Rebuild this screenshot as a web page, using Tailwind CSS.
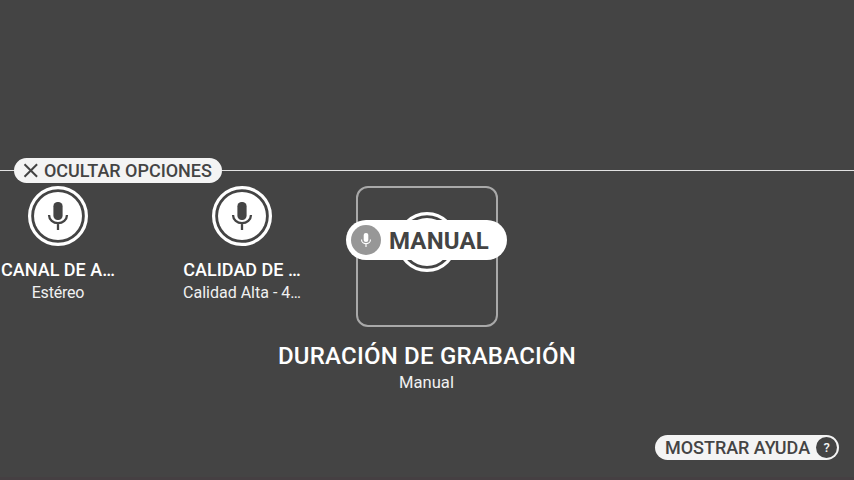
<!DOCTYPE html>
<html lang="es">
<head>
<meta charset="utf-8">
<title>Opciones de grabación</title>
<script src="https://cdn.jsdelivr.net/npm/@tailwindcss/browser@4"></script>
</head>
<body class="bg-[#444444] font-['Roboto',sans-serif] text-white">
<svg class="hidden">
  <symbol id="mic" viewBox="0 0 24 32">
    <rect x="7.4" y="2" width="9.2" height="18" rx="4.2" fill="currentColor"/>
    <path d="M3.1 15v.6a8.9 7.6 0 0 0 17.8 0v-.6M12 23.2v6.8" fill="none" stroke="currentColor" stroke-width="2.3"/>
  </symbol>
  <symbol id="ring" viewBox="0 0 60 60">
    <circle cx="30" cy="30" r="28.4" fill="none" stroke="white" stroke-width="3.2"/>
    <circle cx="30" cy="30" r="24" fill="white"/>
  </symbol>
  <symbol id="mic-ring" viewBox="0 0 60 60">
    <use href="#ring" width="60" height="60"/>
    <use href="#mic" x="18" y="14" width="24" height="32"/>
  </symbol>
</svg>
<main class="flex h-[480px] w-[854px] flex-col overflow-hidden border-b-3 border-[#453f42] pt-[158px]">
  <div class="flex h-[25px] shrink-0 items-center">
    <div class="h-px w-[14px] bg-[#e2e2e2]"></div>
    <button class="flex h-[25px] w-[208px] items-center rounded-full bg-[#f4f4f4] pl-[9px] text-[18px] font-medium tracking-[-0.03px] whitespace-nowrap text-[#444]">
      <svg class="mr-[6px] size-[15px] shrink-0" viewBox="0 0 15 15"><path d="M1.5 1.2l12.6 12.6M14.1 1.2l-12.6 12.6" stroke="currentColor" stroke-width="2"/></svg>
      <span>OCULTAR OPCIONES</span>
    </button>
    <div class="h-px grow bg-[#e2e2e2]"></div>
  </div>
  <section class="-ml-[34px] mt-[3px] flex h-[220px] shrink-0">
    <div class="flex w-[184px] shrink-0 flex-col items-center">
      <svg class="size-[60px] text-[#444]"><use href="#mic-ring"/></svg>
      <div class="mt-[12px] h-[24px] text-[18px] leading-[24px] font-medium whitespace-nowrap">CANAL DE A…</div>
      <div class="h-[22px] text-[16px] leading-[22px] tracking-[-0.2px] whitespace-nowrap text-[#f1f1f1]">Estéreo</div>
    </div>
    <div class="flex w-[184px] shrink-0 flex-col items-center">
      <svg class="size-[60px] text-[#444]"><use href="#mic-ring"/></svg>
      <div class="mt-[12px] h-[24px] text-[18px] leading-[24px] font-medium whitespace-nowrap">CALIDAD DE …</div>
      <div class="h-[22px] text-[16px] leading-[22px] whitespace-nowrap text-[#f1f1f1]">Calidad Alta - 4…</div>
    </div>
    <div class="flex w-[186px] shrink-0 flex-col items-center">
      <div class="relative flex h-[141px] w-[142px] justify-center rounded-[12px] border-2 border-[#a9a9a9] pt-[24px] pr-px">
        <svg class="size-[60px]"><use href="#ring"/></svg>
        <div class="absolute top-[32px] -left-[12px] flex h-[40px] w-[161px] items-center rounded-full bg-white pl-[5px] text-[24px] font-bold tracking-[0.15px] whitespace-nowrap text-[#444]">
          <div class="mr-[8px] flex size-[30px] shrink-0 items-center justify-center rounded-full bg-[#979797] text-white"><svg class="h-[16px] w-[12px]"><use href="#mic"/></svg></div>
          <span class="pt-[2px]">MANUAL</span>
        </div>
      </div>
      <div class="mt-[13px] h-[32px] text-[24px] leading-[32px] font-medium tracking-[0.21px] whitespace-nowrap">DURACIÓN DE GRABACIÓN</div>
      <div class="h-[22px] pr-px text-[16.6px] leading-[22px] text-[#f1f1f1]">Manual</div>
    </div>
  </section>
  <div class="mt-[29px] flex justify-end pr-[15px]">
    <button class="flex h-[25px] w-[184px] items-center rounded-full bg-[#f4f4f4] pl-[10px] text-[18px] font-medium tracking-[-0.03px] whitespace-nowrap text-[#444]">
      <span>MOSTRAR AYUDA</span>
      <span class="ml-[6px] flex size-[21px] shrink-0 items-center justify-center rounded-full bg-[#444] pt-px text-[13px] text-[#f4f4f4]">?</span>
    </button>
  </div>
</main>
</body>
</html>
